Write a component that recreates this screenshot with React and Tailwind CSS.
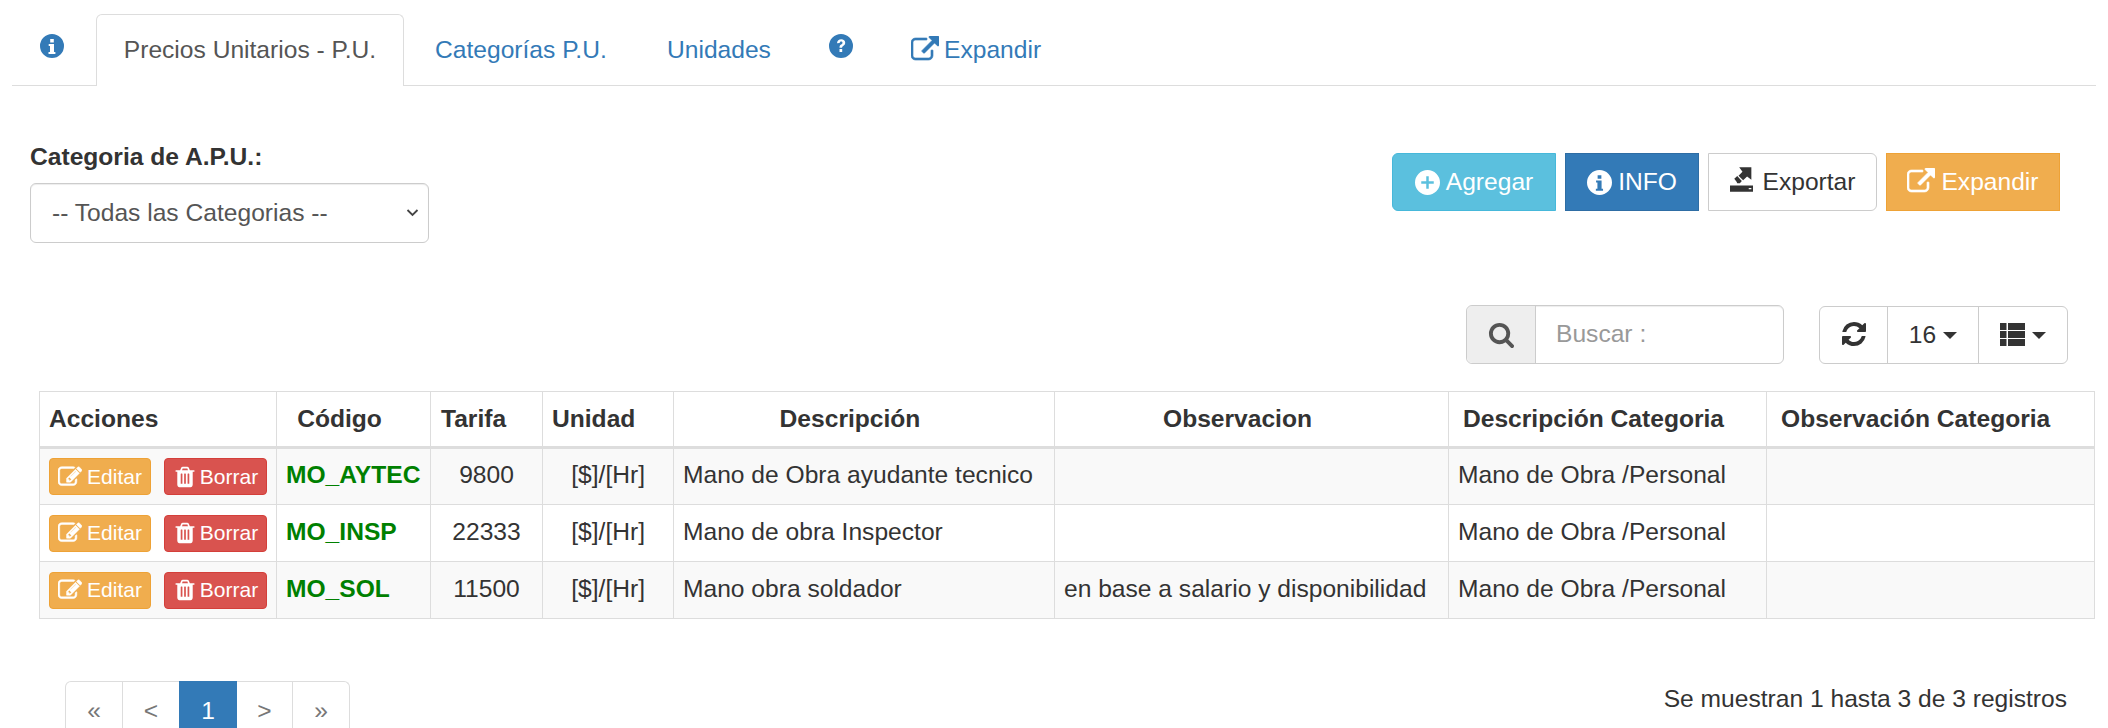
import React from 'react';

const FA = ({ d, className, bold }) => (
  <svg viewBox="0 0 1792 1792" className={className} fill="currentColor" stroke={bold ? 'currentColor' : 'none'} strokeWidth={bold ? 40 : 0}><path d={d} /></svg>
);

const CIRCLE = "M12 0a12 12 0 1 0 0 24a12 12 0 1 0 0-24z";

const Sign = ({ d, className }) => (
  <svg viewBox="0 0 24 24" className={className} fill="currentColor"><path fillRule="evenodd" d={CIRCLE + d} /></svg>
);

const signs = {
  info: "M10.2 5h3.6v3.4h-3.6zM8.7 10h5.3v8h1.4v2h-6.9v-2h1.5v-6h-1.3z",
  plus: "M10.8 6h2.4v4.8h4.8v2.4h-4.8v4.8h-2.4v-4.8h-4.8v-2.4h4.8z",
  question: "M8 9.2c.2-2.6 1.9-4 4.2-4 2.4 0 4 1.4 4 3.5 0 1.6-.8 2.4-2 3.2-.9.6-1.1.9-1.1 1.9h-2.6c0-1.8.4-2.5 1.6-3.3.9-.6 1.4-1 1.4-1.8 0-.8-.6-1.3-1.4-1.3-.9 0-1.4.6-1.5 1.7zM10.5 15h2.7v3h-2.7z",
};

const icons = {
  link: "M1408 928v320q0 119-84.5 203.5t-203.5 84.5h-832q-119 0-203.5-84.5t-84.5-203.5v-832q0-119 84.5-203.5t203.5-84.5h704q14 0 23 9t9 23v64q0 14-9 23t-23 9h-704q-66 0-113 47t-47 113v832q0 66 47 113t113 47h832q66 0 113-47t47-113v-320q0-14 9-23t23-9h64q14 0 23 9t9 23zm384-864v512q0 26-19 45t-45 19-45-19l-176-176-652 652q-10 10-23 10t-23-10l-114-114q-10-10-10-23t10-23l652-652-176-176q-19-19-19-45t19-45 45-19h512q26 0 45 19t19 45z",
  edit: "M888 1184l116-116-152-152-116 116v56h96v96h56zm440-720q-16-16-33 1l-350 350q-17 17-1 33t33-1l350-350q17-17 1-33zm80 594v190q0 119-84.5 203.5t-203.5 84.5h-832q-119 0-203.5-84.5t-84.5-203.5v-832q0-119 84.5-203.5t203.5-84.5h832q63 0 117 25 15 7 18 23 3 17-9 29l-49 49q-14 14-32 8-23-6-45-6h-832q-66 0-113 47t-47 113v832q0 66 47 113t113 47h832q66 0 113-47t47-113v-126q0-13 9-22l64-64q15-15 35-7t20 29zm-96-738l288 288-672 672h-288v-288zm444 132l-92 92-288-288 92-92q28-28 68-28t68 28l152 152q28 28 28 68t-28 68z",
  trash: "M704 1376v-704q0-14-9-23t-23-9h-64q-14 0-23 9t-9 23v704q0 14 9 23t23 9h64q14 0 23-9t9-23zm256 0v-704q0-14-9-23t-23-9h-64q-14 0-23 9t-9 23v704q0 14 9 23t23 9h64q14 0 23-9t9-23zm256 0v-704q0-14-9-23t-23-9h-64q-14 0-23 9t-9 23v704q0 14 9 23t23 9h64q14 0 23-9t9-23zm-544-992h448l-48-117q-7-9-17-11h-317q-10 2-17 11zm928 32v64q0 14-9 23t-23 9h-96v948q0 83-47 143.5t-113 60.5h-832q-66 0-113-58.5t-47-141.5v-952h-96q-14 0-23-9t-9-23v-64q0-14 9-23t23-9h309l70-167q15-37 54-63t79-26h320q40 0 79 26t54 63l70 167h309q14 0 23 9t9 23z",
  search: "M1216 832q0-185-131.5-316.5t-316.5-131.5-316.5 131.5-131.5 316.5 131.5 316.5 316.5 131.5 316.5-131.5 131.5-316.5zm512 832q0 52-38 90t-90 38q-54 0-90-38l-343-342q-179 124-399 124-143 0-273.5-55.5t-225-150-150-225-55.5-273.5 55.5-273.5 150-225 225-150 273.5-55.5 273.5 55.5 225 150 150 225 55.5 273.5q0 220-124 399l343 343q37 37 37 90z",
  refresh: "M1639 1056q0 5-1 7-64 268-268 434.5t-478 166.5q-146 0-282.5-55t-243.5-157l-129 129q-19 19-45 19t-45-19-19-45v-448q0-26 19-45t45-19h448q26 0 45 19t19 45-19 45l-137 137q71 66 161 102t187 36q134 0 250-65t186-179q11-17 53-117 8-23 30-23h192q13 0 22.5 9.5t9.5 22.5zm25-800v448q0 26-19 45t-45 19h-448q-26 0-45-19t-19-45 19-45l138-138q-148-137-349-137-134 0-250 65t-186 179q-11 17-53 117-8 23-30 23h-199q-13 0-22.5-9.5t-9.5-22.5v-7q65-268 270-434.5t480-166.5q146 0 284 55.5t245 156.5l130-129q19-19 45-19t45 19 19 45z",
};

const ExportIcon = ({ className }) => (
  <svg viewBox="0 0 70 75" className={className} fill="currentColor">
    <path fillRule="evenodd" d="M0 56h70v19H0zM57 63v4h8v-4z" />
    <path d="M28 0h37v38L52 28 40 40 26 26l12-12z" />
    <path d="M13 35l9-8 14 15-6 7h-8l-2-5z" />
  </svg>
);

const ThList = ({ className }) => (
  <svg viewBox="0 0 25 23" className={className} fill="currentColor">
    <path d="M0 0h6.5v7H0zM8 0h17v7H8zM0 8h6.5v7H0zM8 8h17v7H8zM0 16h6.5v7H0zM8 16h17v7H8z" />
  </svg>
);

const Caret = () => (
  <span className="inline-block w-0 h-0 ml-[7px] border-x-[7px] border-x-transparent border-t-[7px] border-t-[#333]"></span>
);

const rows = [
  { code: 'MO_AYTEC', tarifa: '9800', desc: 'Mano de Obra ayudante tecnico', obs: '' },
  { code: 'MO_INSP', tarifa: '22333', desc: 'Mano de obra Inspector', obs: '' },
  { code: 'MO_SOL', tarifa: '11500', desc: 'Mano obra soldador', obs: 'en base a salario y disponibilidad' },
];

const App = () => {
  return (
    <div className="h-[728px] overflow-hidden bg-white text-[#333] text-[24.6px] font-['Liberation_Sans',Arial,sans-serif]">
      <div className="ml-3 pt-[14px] h-[86px] flex border-b border-[#ddd] w-[2084px]">
        <a className="w-[84px] pt-[20px] pl-[28px] text-[#337ab7]"><Sign d={signs.info} className="w-[24px] h-[24px]" /></a>
        <a className="w-[308px] h-[72px] flex items-center justify-center border border-b-0 border-[#ddd] rounded-t-[6px] bg-white text-[#555]">Precios Unitarios - P.U.</a>
        <a className="w-[236px] pl-[31px] flex items-center text-[#337ab7] h-[72px]">Categorías P.U.</a>
        <a className="w-[160px] pl-[27px] flex items-center text-[#337ab7] h-[72px]">Unidades</a>
        <a className="w-[86px] pt-[20px] pl-[29px] text-[#337ab7]"><Sign d={signs.question} className="w-[24px] h-[24px]" /></a>
        <a className="flex items-center h-[72px] pl-[25px] text-[#337ab7]"><FA d={icons.link} bold className="w-[28px] h-[28px] mr-[5px]" />Expandir</a>
      </div>

      <div className="flex justify-between h-[219px] pl-[30px] pr-[48px]">
        <div className="pt-[56px]">
          <div className="font-bold h-[41px] leading-[30px]">Categoria de A.P.U.:</div>
          <div className="w-[399px] h-[60px] flex items-center justify-between pl-[21px] pr-[9px] border border-[#ccc] rounded-[6px] shadow-[inset_0_1px_1px_rgba(0,0,0,0.075)] text-[#555]">
            <span>-- Todas las Categorias --</span>
            <svg viewBox="0 0 12 8" className="w-[13px] h-[8px]" fill="none" stroke="#444" strokeWidth="1.8"><path d="M1 1l5 5 5-5" /></svg>
          </div>
        </div>
        <div className="flex gap-[9px] pt-[67px] h-fit">
          <a className="w-[164px] h-[58px] flex items-center justify-center bg-[#5bc0de] border border-[#46b8da] rounded-l-[6px] text-white"><Sign d={signs.plus} className="w-[25px] h-[25px] mr-[6px]" />Agregar</a>
          <a className="w-[134px] h-[58px] flex items-center justify-center bg-[#337ab7] border border-[#2e6da4] text-white"><Sign d={signs.info} className="w-[25px] h-[25px] mr-[6px]" />INFO</a>
          <a className="w-[169px] h-[58px] flex items-center justify-center bg-white border border-[#ccc] rounded-r-[6px]"><ExportIcon className="w-[23px] h-[25px] mr-[10px] mb-[5px]" />Exportar</a>
          <a className="w-[174px] h-[58px] flex items-center justify-center bg-[#f0ad4e] border border-[#eea236] text-white"><FA d={icons.link} bold className="w-[28px] h-[28px] mr-[6px]" />Expandir</a>
        </div>
      </div>

      <div className="flex justify-end items-start gap-[35px] pr-[40px] h-[59px]">
        <div className="w-[318px] h-[59px] flex border border-[#ccc] rounded-[6px] shadow-[inset_0_1px_1px_rgba(0,0,0,0.075)]">
          <span className="w-[69px] flex items-center justify-center bg-[#eee] border-r border-[#ccc] rounded-l-[6px] text-[#555]"><FA d={icons.search} className="w-[27px] h-[27px]" /></span>
          <span className="flex items-center pl-[20px] text-[#999]">Buscar :</span>
        </div>
        <div className="w-[249px] h-[58px] mt-[1px] flex border border-[#ccc] rounded-[6px]">
          <span className="w-[68px] flex items-center justify-center border-r border-[#ccc]"><FA d={icons.refresh} className="w-[28px] h-[28px] mb-[2px]" /></span>
          <span className="w-[91px] flex items-center justify-center border-r border-[#ccc]">16<Caret /></span>
          <span className="flex-1 flex items-center justify-center"><ThList className="w-[25px] h-[23px] mb-[2px]" /><Caret /></span>
        </div>
      </div>

      <table className="ml-[39px] mt-[27px] w-[2055px] table-fixed border-collapse border border-[#ddd]">
        <colgroup>
          <col className="w-[237px]" />
          <col className="w-[154px]" />
          <col className="w-[112px]" />
          <col className="w-[131px]" />
          <col className="w-[381px]" />
          <col className="w-[394px]" />
          <col className="w-[318px]" />
          <col className="w-[328px]" />
        </colgroup>
        <thead>
          <tr className="h-[56px] text-left border-b-[3px] border-[#ddd]">
            <th className="border border-[#ddd] border-b-[3px] px-[9px]">Acciones</th>
            <th className="border border-[#ddd] border-b-[3px] text-center pr-[28px]">Código</th>
            <th className="border border-[#ddd] border-b-[3px] pl-[10px]">Tarifa</th>
            <th className="border border-[#ddd] border-b-[3px] px-[9px]">Unidad</th>
            <th className="border border-[#ddd] border-b-[3px] text-center pr-[28px]">Descripción</th>
            <th className="border border-[#ddd] border-b-[3px] text-center pr-[28px]">Observacion</th>
            <th className="border border-[#ddd] border-b-[3px] px-[14px]">Descripción Categoria</th>
            <th className="border border-[#ddd] border-b-[3px] px-[14px]">Observación Categoria</th>
          </tr>
        </thead>
        <tbody>
          {rows.map((row, i) => (
            <tr key={row.code} className={`h-[57px] ${i % 2 === 0 ? 'bg-[#f9f9f9]' : 'bg-white'}`}>
              <td className="border border-[#ddd] px-[9px]">
                <div className="flex gap-[13px] text-[21px]">
                  <a className="w-[102px] h-[37px] flex items-center justify-center bg-[#f0ad4e] border border-[#eea236] rounded-[4px] text-white"><FA d={icons.edit} bold className="w-[24px] h-[24px] mr-[5px]" />Editar</a>
                  <a className="w-[103px] h-[37px] flex items-center justify-center bg-[#d9534f] border border-[#d43f3a] rounded-[4px] text-white"><FA d={icons.trash} className="w-[24px] h-[24px] mr-[3px]" />Borrar</a>
                </div>
              </td>
              <td className="border border-[#ddd] px-[9px] pb-[2px] font-bold text-[#008000]">{row.code}</td>
              <td className="border border-[#ddd] text-center pb-[2px]">{row.tarifa}</td>
              <td className="border border-[#ddd] text-right pr-[28px] pb-[2px]">[$]/[Hr]</td>
              <td className="border border-[#ddd] px-[9px] pb-[2px]">{row.desc}</td>
              <td className="border border-[#ddd] px-[9px] pb-[2px]">{row.obs}</td>
              <td className="border border-[#ddd] px-[9px] pb-[2px]">Mano de Obra /Personal</td>
              <td className="border border-[#ddd] px-[9px] pb-[2px]"></td>
            </tr>
          ))}
        </tbody>
      </table>

      <div className="flex justify-between items-start mt-[62px] pl-[65px] pr-[41px]">
        <div className="flex h-[60px] border border-[#ddd] border-b-0 rounded-t-[6px] text-[#777]">
          <span className="w-[57px] flex items-center justify-center border-r border-[#ddd]">«</span>
          <span className="w-[56px] flex items-center justify-center">&lt;</span>
          <span className="w-[58px] flex items-center justify-center bg-[#337ab7] text-white mt-[-1px]">1</span>
          <span className="w-[56px] flex items-center justify-center border-r border-[#ddd]">&gt;</span>
          <span className="w-[56px] flex items-center justify-center">»</span>
        </div>
        <div className="text-[#333]">Se muestran 1 hasta 3 de 3 registros</div>
      </div>
    </div>
  );
};

export default App;
